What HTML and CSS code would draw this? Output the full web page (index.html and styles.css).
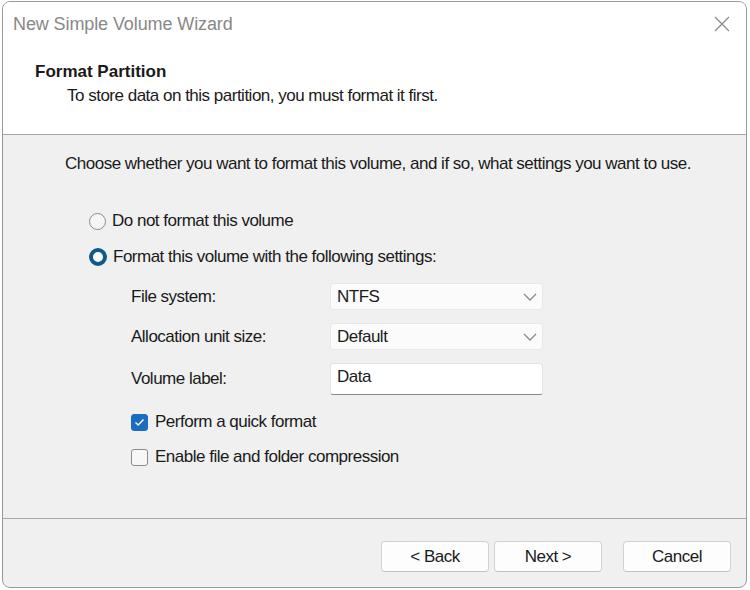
FILE: index.html
```html
<!DOCTYPE html>
<html>
<head>
<meta charset="utf-8">
<link rel="stylesheet" href="styles.css">
</head>
<body>
<div class="window">
  <div class="top">
    <div class="titlebar">
      <span class="title">New Simple Volume Wizard</span>
      <svg class="close" width="16" height="16" viewBox="0 0 16 16"><path d="M1 1 L15 15 M15 1 L1 15" stroke="#8c8c8c" stroke-width="1.3" fill="none"/></svg>
    </div>
    <div class="header">
      <div class="h1">Format Partition</div>
      <div class="sub">To store data on this partition, you must format it first.</div>
    </div>
  </div>
  <div class="body">
    <div class="intro">Choose whether you want to format this volume, and if so, what settings you want to use.</div>
    <div class="radios">
      <div class="radio-row"><span class="radio"></span><span>Do not format this volume</span></div>
      <div class="radio-row"><span class="radio on"></span><span>Format this volume with the following settings:</span></div>
    </div>
    <div class="form">
      <div class="flabel">File system:</div>
      <div class="select"><span>NTFS</span><svg width="14" height="8" viewBox="0 0 14 8"><path d="M1 1 L7 7 L13 1" stroke="#8a8a8a" stroke-width="1.3" fill="none"/></svg></div>
      <div class="flabel">Allocation unit size:</div>
      <div class="select"><span>Default</span><svg width="14" height="8" viewBox="0 0 14 8"><path d="M1 1 L7 7 L13 1" stroke="#8a8a8a" stroke-width="1.3" fill="none"/></svg></div>
      <div class="flabel">Volume label:</div>
      <div class="input">Data</div>
    </div>
    <div class="checks">
      <div class="check-row"><span class="cb on"><svg width="11" height="9" viewBox="0 0 11 9"><path d="M1.5 4.5 L4.2 7 L9.5 1.5" stroke="#fff" stroke-width="1.4" fill="none"/></svg></span><span>Perform a quick format</span></div>
      <div class="check-row"><span class="cb"></span><span>Enable file and folder compression</span></div>
    </div>
  </div>
  <div class="footer">
    <button class="btn">&lt; Back</button>
    <button class="btn">Next &gt;</button>
    <button class="btn cancel">Cancel</button>
  </div>
</div>
</body>
</html>
```
FILE: styles.css
```css
html, body {
  margin: 0;
  padding: 0;
  background: #ffffff;
}
body {
  font-family: "Liberation Sans", Arial, sans-serif;
  font-size: 17px;
  letter-spacing: -0.5px;
  color: #1a1a1a;
}
.window {
  margin: 1px 2px 0 2px;
  width: 743px;
  height: 585px;
  border: 1px solid #9a9a9a;
  border-radius: 8px;
  overflow: hidden;
  background: #f0f0f0;
  display: flex;
  flex-direction: column;
}
.top {
  background: #ffffff;
  border-bottom: 1px solid #a8a8a8;
  height: 132px;
}
.titlebar {
  height: 43px;
  display: flex;
  align-items: center;
  justify-content: space-between;
  padding: 0 16px 0 10px;
}
.title {
  color: #888888;
  font-size: 18px;
  letter-spacing: -0.1px;
  margin-top: 1px;
}
.close { margin-top: 1px; }
.header {
  padding: 17px 0 0 32px;
}
.h1 {
  font-weight: bold;
  font-size: 17px;
  line-height: 20px;
  letter-spacing: 0;
}
.sub {
  margin: 4px 0 0 32px;
  line-height: 20px;
}
.body {
  flex: 1;
  padding: 19px 0 0 62px;
}
.intro {
  line-height: 20px;
}
.radios {
  margin: 37px 0 0 24px;
  display: flex;
  flex-direction: column;
  gap: 16px;
}
.radio-row {
  display: flex;
  align-items: center;
  height: 20px;
  gap: 6px;
}
.radio {
  width: 15px;
  height: 15px;
  border: 1.5px solid #8a8a8a;
  border-radius: 50%;
  background: #f6f6f6;
}
.radio.on {
  width: 10px;
  height: 10px;
  border: 4px solid #0e5a8e;
  background: #ffffff;
}
.form {
  margin: 16px 0 0 66px;
  display: grid;
  grid-template-columns: 199px 213px;
  grid-template-rows: 27px 27px 32px;
  row-gap: 13px;
  align-items: center;
}
.flabel {
  line-height: 20px;
}
.select {
  height: 27px;
  box-sizing: border-box;
  background: #fbfbfb;
  border: 1px solid #e8e8e8;
  border-radius: 3px;
  display: flex;
  align-items: center;
  justify-content: space-between;
  padding: 0 5px 0 6px;
}
.input {
  height: 32px;
  box-sizing: border-box;
  background: #ffffff;
  border: 1px solid #e2e2e2;
  border-bottom: 1.5px solid #8a8a8a;
  border-radius: 3px;
  padding: 3px 6px 0;
  line-height: 20px;
}
.checks {
  margin: 17px 0 0 66px;
  display: flex;
  flex-direction: column;
  gap: 15px;
}
.check-row {
  display: flex;
  align-items: center;
  height: 20px;
  gap: 7px;
}
.cb {
  width: 17px;
  height: 17px;
  box-sizing: border-box;
  border: 1px solid #8c8c8c;
  border-radius: 3px;
  background: #f7f7f7;
  display: flex;
  align-items: center;
  justify-content: center;
}
.cb.on {
  background: #1a6dc0;
  border-color: #1a6dc0;
}
.footer {
  border-top: 1px solid #a8a8a8;
  height: 69px;
  display: flex;
  justify-content: flex-end;
  padding: 22px 15px 0 0;
  box-sizing: border-box;
}
.btn {
  font-family: "Liberation Sans", Arial, sans-serif;
  font-size: 17px;
  letter-spacing: -0.5px;
  color: #1a1a1a;
  width: 108px;
  height: 31px;
  background: #fdfdfd;
  border: 1px solid #d2d2d2;
  border-bottom-color: #c2c2c2;
  border-radius: 4px;
  margin-left: 5px;
  padding: 0;
}
.btn.cancel {
  margin-left: 21px;
}
```
